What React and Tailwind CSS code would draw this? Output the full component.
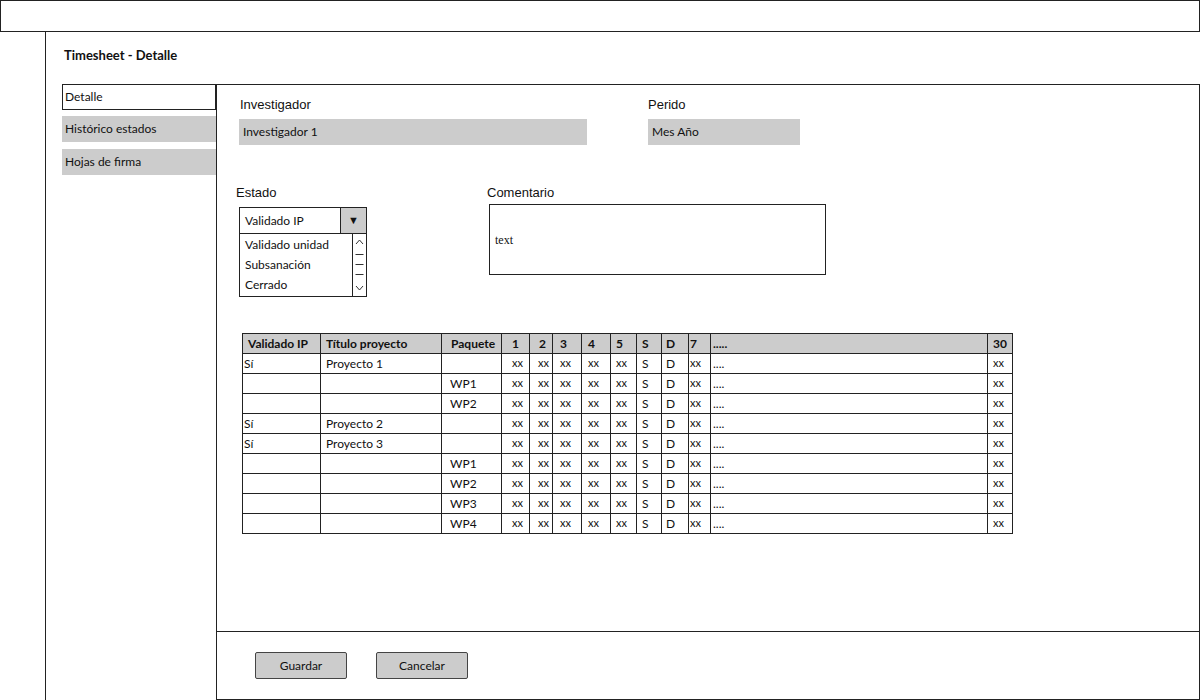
const LABEL = "font-['Liberation_Sans',Arial,sans-serif] text-[13px] leading-[15px]";

const COLS =
  "grid-cols-[78px_121px_60px_28px_23px_29px_29px_26px_25px_27px_22px_277px_25px]";

const HEAD_PAD = ["pl-[5px]", "pl-[5px]", "pl-[9px]", "pl-[10px]", "pl-[9px]", "pl-[7px]", "pl-[6px]", "pl-[5px]", "pl-[5px]", "pl-[4px]", "pl-[1px]", "pl-[2px]", "pl-[5px]"];
const CELL_PAD = ["pl-[1px]", "pl-[5px]", "pl-[8px]", "pl-[10px]", "pl-[8px]", "pl-[7px]", "pl-[6px]", "pl-[5px]", "pl-[5px]", "pl-[4px]", "pl-[1px]", "pl-[2px]", "pl-[5px]"];

const HEADERS = ["Validado IP", "Título proyecto", "Paquete", "1", "2", "3", "4", "5", "S", "D", "7", ".....", "30"];
const DAYS = ["xx", "xx", "xx", "xx", "xx", "S", "D", "xx", "....", "xx"];

const ROWS = [
  ["Sí", "Proyecto 1", ""],
  ["", "", "WP1"],
  ["", "", "WP2"],
  ["Sí", "Proyecto 2", ""],
  ["Sí", "Proyecto 3", ""],
  ["", "", "WP1"],
  ["", "", "WP2"],
  ["", "", "WP3"],
  ["", "", "WP4"],
];

function Tabs() {
  return (
    <div className="w-[170px] pl-[16px]">
      <div className="h-[26px] border border-[#222] flex items-center pl-[2px] text-[12px]">Detalle</div>
      <div className="mt-[6px] h-[26px] bg-[#cccccc] flex items-center pl-[3px] text-[12px]">Histórico estados</div>
      <div className="mt-[7px] h-[26px] bg-[#cccccc] flex items-center pl-[3px] text-[12px]">Hojas de firma</div>
    </div>
  );
}

function Scrollbar() {
  return (
    <div className="w-[14px] border-l border-[#222]">
      <svg width="13" height="62" viewBox="0 0 13 62" fill="none" stroke="#333" strokeWidth="1">
        <path d="M3 10 L6.5 6 L10 10" />
        <path d="M2.5 20.5 H10.5 M2.5 30.5 H10.5 M2.5 40.5 H10.5" />
        <path d="M3 52 L6.5 56 L10 52" />
      </svg>
    </div>
  );
}

function EstadoSelect() {
  return (
    <div className="mt-[7px] ml-[3px] w-[128px] text-[12px]">
      <div className="h-[27px] border border-[#222] flex">
        <div className="flex-1 flex items-center pl-[5px] pt-[1px]">Validado IP</div>
        <div className="w-[26px] border-l border-[#222] bg-[#cccccc] flex items-center justify-center text-[11px]">▼</div>
      </div>
      <div className="h-[63px] border-x border-b border-[#222] flex">
        <div className="flex-1 pl-[5px] pt-[1px]">
          <div className="h-[20px] flex items-center">Validado unidad</div>
          <div className="h-[20px] flex items-center">Subsanación</div>
          <div className="h-[20px] flex items-center">Cerrado</div>
        </div>
        <Scrollbar />
      </div>
    </div>
  );
}

function Table() {
  return (
    <div className={`mt-[36px] ml-[3px] w-[771px] grid ${COLS} border-t border-r border-[#222] text-[12px]`}>
      {HEADERS.map((h, i) => (
        <div
          key={"h" + i}
          className={`h-[20px] bg-[#cccccc] border-l border-b border-[#222] flex items-center font-bold ${HEAD_PAD[i]}`}
        >
          {h}
        </div>
      ))}
      {ROWS.map((r, ri) =>
        [...r, ...DAYS].map((c, ci) => (
          <div
            key={ri + "-" + ci}
            className={`h-[20px] border-l border-b border-[#222] flex items-center ${CELL_PAD[ci]} ${ci > 2 && c === "xx" ? "text-[11px]" : ""}`}
          >
            {c}
          </div>
        ))
      )}
    </div>
  );
}

export default function App() {
  return (
    <div className="w-[1200px] h-[700px] bg-white flex flex-col font-['Lato',sans-serif] text-[#111]">
      {/* top bar */}
      <div className="h-[32px] shrink-0 border border-[#222]" />

      <div className="flex flex-1 min-h-0">
        <div className="w-[46px] shrink-0 border-r border-[#222]" />

        <div className="flex-1 flex flex-col min-w-0">
          <div className="h-[52px] shrink-0 pl-[18px] pt-[15px] text-[13px] leading-[16px] font-bold">
            Timesheet - Detalle
          </div>

          <div className="flex flex-1 min-h-0">
            <Tabs />

            {/* main panel */}
            <div className="flex-1 flex flex-col border border-[#222]">
              <div className="flex-1 pl-[22px] pt-[12px]">
                <div className="flex">
                  <div className="w-[348px]">
                    <div className={`pl-[1px] ${LABEL}`}>Investigador</div>
                    <div className="mt-[7px] h-[26px] bg-[#cccccc] flex items-center pl-[4px] text-[12px]">Investigador 1</div>
                  </div>
                  <div className="ml-[61px] w-[152px]">
                    <div className={LABEL}>Perido</div>
                    <div className="mt-[7px] h-[26px] bg-[#cccccc] flex items-center pl-[4px] text-[12px]">Mes Año</div>
                  </div>
                </div>

                <div className="flex mt-[40px] -ml-[3px]">
                  <div className="w-[251px]">
                    <div className={LABEL}>Estado</div>
                    <EstadoSelect />
                  </div>
                  <div>
                    <div className={LABEL}>Comentario</div>
                    <div className="mt-[4px] ml-[2px] w-[337px] h-[71px] border border-[#222] flex items-center pl-[5px] font-['Liberation_Serif',serif] text-[12px]">
                      text
                    </div>
                  </div>
                </div>

                <Table />
              </div>

              {/* footer */}
              <div className="h-[68px] shrink-0 border-t border-[#222] pt-[20px] pl-[38px] flex items-start gap-[29px] text-[12px]">
                <button className="w-[92px] h-[27px] bg-[#cccccc] border border-[#444] rounded-[2px] flex items-center justify-center">
                  Guardar
                </button>
                <button className="w-[92px] h-[27px] bg-[#cccccc] border border-[#444] rounded-[2px] flex items-center justify-center">
                  Cancelar
                </button>
              </div>
            </div>
          </div>
        </div>
      </div>
    </div>
  );
}
